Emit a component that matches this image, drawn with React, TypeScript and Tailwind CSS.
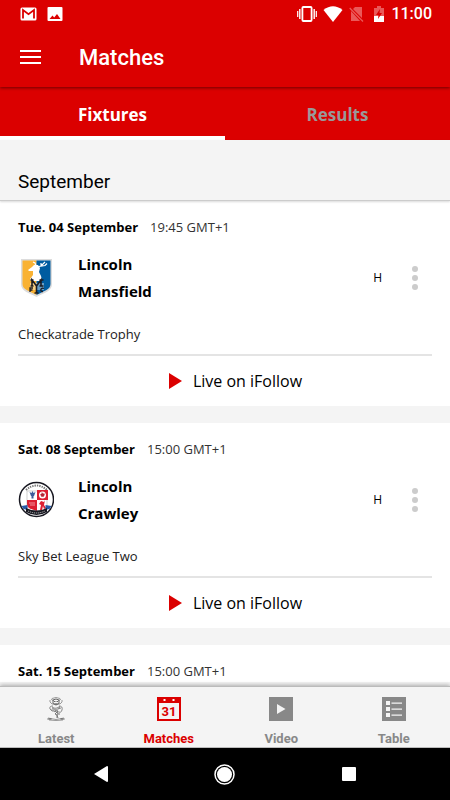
import { useState, type ReactNode } from 'react'
import clsx from 'clsx'

type Match = {
  date: string
  time: string
  home: string
  away: string
  competition: string
  venue: string
  crest: ReactNode
}

function MansfieldCrest() {
  return (
    <svg className="w-9 h-10" viewBox="0 0 36 40" role="img" aria-label="Mansfield">
      <path d="M3 1h31v25c0 7-8 9-15.500 13C11 35 3 33 3 26z" fill="#dcdcdc" />
      <path d="M4.500 2.500h14v34.500C12 33 4.500 32 4.500 26z" fill="#f9b233" />
      <path d="M18.500 2.500h14V26c0 6-7 7-14 11z" fill="#005ca0" />
      <path
        d="M10 12l4-3 2-2 4 0 2 3-1 4 2 4 1 4-3 1h-8l-1-2 3-4 0-4-4 0z"
        fill="#fff"
      />
      <path d="M19 9l4-1 4-4M21 8.500l6-1 2-2M23 8v-3M18 8l-1-3-2-1" stroke="#fff" strokeWidth="1.200" fill="none" />
      <path d="M12 25h14v7H12z" fill="#fff" opacity=".4" />
      <path
        d="M14 28v-6l4.500 6 4.500-6v6M12.500 22h3M21.500 22h4M12.500 28h3M21.500 28h4M18.500 28v7M16.500 35h4"
        stroke="#1c1c22"
        strokeWidth="1.600"
        fill="none"
      />
      <path d="M12 34v-4h3M12 32h2.500M26 30.500c-3-1.500-5 3-1 3" stroke="#1c1c22" strokeWidth="1.300" fill="none" />
    </svg>
  )
}

function CrawleyCrest() {
  return (
    <svg className="w-9 h-10" viewBox="0 0 36 40" role="img" aria-label="Crawley">
      <circle cx="18.500" cy="19.500" r="17" fill="#fff" stroke="#171720" strokeWidth="1.500" />
      <path d="M8 10q10.500-9 21 0" fill="none" stroke="#777" strokeWidth="2" strokeDasharray="1.400 1" />
      <path d="M9 11h20v15c0 4-5 5-10 8-5-3-10-4-10-8z" fill="#fff" stroke="#bbb" strokeWidth=".7" />
      <path d="M19 10h11v10H19zM9 20h10v11c-5-2-10-2-10-7z" fill="#dc1f32" />
      <circle cx="24.500" cy="15" r="3.500" fill="#fff" />
      <path d="M24.500 13l2 1.500-1 2h-2l-1-2zM22.500 11.500l1 1M27.500 13l-1 1" fill="#b32434" stroke="#b32434" strokeWidth=".5" />
      <path d="M11.500 12l1.500 4h3l1.500-4-2 1-1-2-1 2zM13.500 16v2.500h2V16" fill="#3d5c9b" />
      <path d="M11 23h6M12 25h5" stroke="#f1949b" />
      <path d="M22 30l1-5-2-1 2-3 3 1 1-2-1 5 2 3-2 1-1-3-1 4z" fill="#dc1f32" />
      <path d="M3.500 26l6-1v5l-4-1zM33.500 26l-6-1v5l4-1z" fill="#2759a5" />
      <path d="M8 28q10.500 5 21 0v4q-10.500 6-21 0z" fill="#171720" />
      <path d="M10 31q8.500 4 17 0" fill="none" stroke="#bbb" strokeDasharray="1.200 .8" />
    </svg>
  )
}

const matches: Match[] = [
  {
    date: 'Tue. 04 September',
    time: '19:45 GMT+1',
    home: 'Lincoln',
    away: 'Mansfield',
    competition: 'Checkatrade Trophy',
    venue: 'H',
    crest: <MansfieldCrest />,
  },
  {
    date: 'Sat. 08 September',
    time: '15:00 GMT+1',
    home: 'Lincoln',
    away: 'Crawley',
    competition: 'Sky Bet League Two',
    venue: 'H',
    crest: <CrawleyCrest />,
  },
  {
    date: 'Sat. 15 September',
    time: '15:00 GMT+1',
    home: '',
    away: '',
    competition: '',
    venue: '',
    crest: null,
  },
]

function StatusBar() {
  return (
    <div className="flex items-center h-[27px] pl-5 pr-[18px] text-white">
      <svg className="w-[17px] h-4" viewBox="0 0 17 16" fill="none">
        <rect x=".5" y="1.500" width="16" height="13" rx="1.500" fill="#fff" />
        <path d="M3 12.500V4l5.500 4.200L14 4v8.500" stroke="#db0000" strokeWidth="1.800" />
      </svg>
      <svg className="ml-2.5 w-4 h-4" viewBox="0 0 16 16">
        <rect x=".5" y="1" width="15" height="14" rx="1" fill="#fff" />
        <path d="M2.500 13l3-3.500 1.700 2L10 8l3.500 5z" fill="#db0000" />
      </svg>
      <div className="ml-auto flex items-center">
        <svg className="w-5 h-4" viewBox="0 0 20 16" fill="none" stroke="#fff">
          <rect x="5.400" y="1" width="9.200" height="14" rx="1" strokeWidth="1.800" />
          <path d="M2.800 3v10M17.200 3v10" strokeWidth="1.400" />
          <path d="M.7 5v6M19.300 5v6" strokeWidth="1.200" />
        </svg>
        <svg className="ml-1.5 w-5 h-4" viewBox="0 0 20 16">
          <path d="M10 16L.5 4Q10-3.500 19.500 4z" fill="#fff" />
        </svg>
        <svg className="ml-1.5 w-4 h-4" viewBox="0 0 16 16">
          <path d="M6 1h7v11L4 3zM2 5l9 10H2z" fill="#ea5959" />
          <path d="M.7 2L14 15.500" stroke="#ea5959" strokeWidth="1.300" />
        </svg>
        <svg className="ml-2 w-3 h-4" viewBox="0 0 12 16">
          <path d="M4 0h4v2h3v8H1V2h3z" fill="#ea5959" />
          <path d="M1 10h10v6H1z" fill="#fff" />
          <path d="M7 3L3 9h2.500L5 13l4-6H6.500z" fill="#db0000" />
        </svg>
        <span className="ml-1.5 font-[Roboto] font-medium text-[16px]">11:00</span>
      </div>
    </div>
  )
}

function MatchCard({ match }: { match: Match }) {
  return (
    <article className="bg-white px-[18px] pt-[17px] shrink-0">
      <div className="flex items-center h-5 text-[13px]">
        <span className="font-bold">{match.date}</span>
        <span className="ml-3 text-[#333]">{match.time}</span>
      </div>
      {match.home && (
        <>
          <div className="mt-[13px] flex items-center">
            <div className="w-[60px]">{match.crest}</div>
            <div className="text-[15px] leading-[27px] font-bold">
              <div>{match.home}</div>
              <div>{match.away}</div>
            </div>
            <span className="ml-auto text-xs">{match.venue}</span>
            <button aria-label="More options" className="ml-[25px] mr-[9px] px-1">
              <svg className="w-2 h-6" viewBox="0 0 8 24" fill="#ccc">
                <circle cx="4" cy="3" r="3" />
                <circle cx="4" cy="12" r="3" />
                <circle cx="4" cy="21" r="3" />
              </svg>
            </button>
          </div>
          <p className="mt-[19px] text-[13px] leading-5 text-[#222]">{match.competition}</p>
          <div className="mt-2.5 h-[2px] bg-[#e4e4e4]" />
          <button className="w-full h-[50px] pl-5 flex items-center justify-center gap-[11px] text-base">
            <svg className="w-3.5 h-4" viewBox="0 0 14 16" fill="#db0000">
              <path d="M1 0l13 8-13 8z" />
            </svg>
            Live on iFollow
          </button>
        </>
      )}
    </article>
  )
}

function ImpIcon() {
  return (
    <svg className="w-6 h-6" viewBox="0 0 24 24" fill="none" stroke="#999" strokeWidth="1">
      <path d="M8 1.500q4-2 8 0M6 3q-1 2 2 4h8q3-2 2-4M7 2l3 2M17 2l-3 2" />
      <path d="M9 3q3-2 6 0v3.500q-3 3-6 0zM10 4.500h1.500M12.500 4.500H14M10.500 7h3" stroke="#666" />
      <path d="M9 9q-4 0-3 3t6 2M15 9q4 0 3 4t-5 1M8 10q4 3 8-1M8 11l6 3M16 10l-6 5M7 13h3M14 12l3-1" stroke="#888" />
      <path d="M11 14l3 2-1 2 1 3M14 14l-3 3 2 1v3M14 17h2" stroke="#777" />
      <path d="M4 21q8 3 16 0M5 23q7 1 14 0M4 21v2M20 21v2" />
      <path d="M4.500 22h3M16.500 22h3" stroke="#555" />
    </svg>
  )
}

function CalendarIcon() {
  return (
    <svg className="w-6 h-6" viewBox="0 0 24 24">
      <path d="M0 0h24v24H0z" fill="#db0000" />
      <path d="M2 6h20v16H2z" fill="#f4f4f4" />
      <path d="M6.500 2h2v2h-2zM15.500 2h2v2h-2z" fill="#fff" />
      <text x="12" y="19" textAnchor="middle" fill="#db0000" className="font-[Roboto] font-bold text-[13px]">
        31
      </text>
    </svg>
  )
}

function VideoIcon() {
  return (
    <svg className="w-6 h-6" viewBox="0 0 24 24">
      <path d="M0 0h24v24H0z" fill="#888" />
      <path d="M8 7l8.500 5L8 17z" fill="#f4f4f4" />
    </svg>
  )
}

function TableIcon() {
  return (
    <svg className="w-6 h-6" viewBox="0 0 24 24">
      <path d="M0 0h24v24H0z" fill="#888" />
      <path d="M4 4h4v4H4zM4 10h4v4H4zM4 16h4v4H4zM9.500 5.500h10.500v1.200H9.500zM9.500 11.500h10.500v1.200H9.500zM9.500 17.500h10.500v1.200H9.500z" fill="#f4f4f4" />
    </svg>
  )
}

const navItems = [
  { label: 'Latest', icon: <ImpIcon /> },
  { label: 'Matches', icon: <CalendarIcon /> },
  { label: 'Video', icon: <VideoIcon /> },
  { label: 'Table', icon: <TableIcon /> },
]

export default function App() {
  const [tab, setTab] = useState('Fixtures')

  return (
    <div className="h-dvh flex flex-col overflow-hidden bg-[#f4f4f4] text-black font-['Open_Sans',sans-serif]">
      <header className="relative z-10 shrink-0 bg-[#db0000] shadow-[0_1px_3px_rgba(0,0,0,0.5)]">
        <StatusBar />
        <div className="flex items-center h-[60px] px-5">
          <button aria-label="Menu">
            <svg className="w-[21px] h-4" viewBox="0 0 21 16" stroke="#fff" strokeWidth="2">
              <path d="M0 2h21M0 8h21M0 14h21" />
            </svg>
          </button>
          <h1 className="ml-[38px] font-[Roboto] font-medium text-[22px] text-white">Matches</h1>
        </div>
      </header>

      <div role="tablist" className="shrink-0 flex h-[53px] bg-[#db0000]">
        {['Fixtures', 'Results'].map((name) => (
          <button
            key={name}
            role="tab"
            aria-selected={tab === name}
            onClick={() => setTab(name)}
            className={clsx(
              'flex-1 pt-1.5 border-b-4 font-bold text-[17px]',
              tab === name ? 'border-white text-white' : 'border-transparent text-[#999]'
            )}
          >
            {name}
          </button>
        ))}
      </div>

      <h2 className="relative z-10 shrink-0 h-[61px] pt-[26px] px-[18px] font-[Roboto] text-[19px] leading-8 bg-[#f4f4f4] border-b border-[#ccc] shadow-[0_1px_2px_rgba(0,0,0,0.15)]">
        September
      </h2>

      <main className="flex-1 min-h-0 overflow-hidden flex flex-col gap-[17px]">
        {matches.map((match) => (
          <MatchCard key={match.date} match={match} />
        ))}
      </main>

      <nav className="relative z-10 shrink-0 flex h-[62px] bg-[#f4f4f4] border-y border-[#bbb] shadow-[0_-1px_4px_rgba(0,0,0,0.3)]">
        {navItems.map(({ label, icon }) => (
          <a
            key={label}
            href="#"
            className={clsx(
              'flex-1 flex flex-col items-center pt-2.5 gap-2.5 font-[Roboto] font-bold text-[13px] leading-4',
              label === 'Matches' ? 'text-[#db0000]' : 'text-[#888]'
            )}
          >
            {icon}
            {label}
          </a>
        ))}
      </nav>

      <div className="shrink-0 h-[52px] bg-black flex items-center justify-around px-[41px]">
        <button aria-label="Back">
          <svg className="w-3.5 h-4" viewBox="0 0 14 16" fill="#fff">
            <path d="M13 0q1 0 1 1v14q0 1-1 1L0 8z" />
          </svg>
        </button>
        <button aria-label="Home">
          <svg className="w-[21px] h-[21px]" viewBox="0 0 21 21">
            <circle cx="10.500" cy="10.500" r="9.500" fill="none" stroke="#fff" strokeWidth="1.500" />
            <circle cx="10.500" cy="10.500" r="7.500" fill="#fff" />
          </svg>
        </button>
        <button aria-label="Overview">
          <svg className="w-3.5 h-3.5" viewBox="0 0 14 14" fill="#fff">
            <rect width="14" height="14" rx="1" />
          </svg>
        </button>
      </div>
    </div>
  )
}
